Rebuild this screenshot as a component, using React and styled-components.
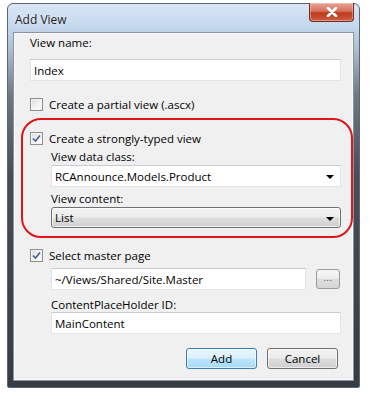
import React from 'react'
import styled, { createGlobalStyle } from 'styled-components'

const GlobalStyle = createGlobalStyle`
  html, body {
    margin: 0;
    padding: 0;
    background: #fff;
  }
  body {
    font-family: "Open Sans", "Liberation Sans", sans-serif;
    font-size: 11.5px;
    color: #000;
  }
`

const Page = styled.div`
  width: 373px;
  height: 399px;
  padding: 3px 0 0 7px;
  box-sizing: border-box;
`

const Window = styled.div`
  width: 353px;
  height: 385px;
  box-sizing: border-box;
  padding: 0 5px 6px 5px;
  border-radius: 6px 6px 2px 2px;
  border: 1px solid #5d6670;
  background: linear-gradient(
    to bottom,
    #d9e7f6 0px,
    #c2d6ec 24px,
    #aebfd2 45px,
    #6f7a86 90px,
    #474e57 170px,
    #363c43 100%
  );
  display: flex;
  flex-direction: column;
`

const TitleBar = styled.div`
  height: 28px;
  display: flex;
  align-items: flex-start;
  justify-content: space-between;
`

const Title = styled.div`
  font-size: 12px;
  color: #1e1e1e;
  padding: 7px 0 0 2px;
  text-shadow: 0 0 6px rgba(255, 255, 255, 0.9);
`

const CloseButton = styled.div`
  width: 43px;
  height: 18px;
  margin-top: -1px;
  border: 1px solid #6b2d22;
  border-top: none;
  border-radius: 0 0 4px 4px;
  background: linear-gradient(to bottom, #e8a493 0%, #d4735e 45%, #c0391f 55%, #cf5d3f 100%);
  box-shadow: inset 0 0 0 1px rgba(255, 220, 210, 0.45);
  display: flex;
  align-items: center;
  justify-content: center;
`

const Client = styled.div`
  flex: 1;
  background: #f0f0f0;
  border: 1px solid #8a939c;
  box-shadow: inset 0 0 0 1px #fafafa;
  padding: 2px 11px 0 16px;
  display: flex;
  flex-direction: column;
`

const Label = styled.div`
  height: 15px;
  line-height: 15px;
  margin-top: ${p => p.$top || 0}px;
  margin-left: ${p => p.$indent || 0}px;
`

const TextBox = styled.div`
  flex-shrink: 0;
  height: ${p => p.$height || 22}px;
  width: ${p => p.$width || 311}px;
  box-sizing: border-box;
  margin-top: ${p => p.$top || 0}px;
  margin-left: ${p => p.$indent || 0}px;
  background: #fff;
  border: 1px solid #e2e6ea;
  border-top-color: #c7ccd2;
  padding: 0 6px 0 3px;
  display: flex;
  align-items: center;
  justify-content: space-between;
`

const ComboBox = styled.div`
  height: 21px;
  width: 290px;
  box-sizing: border-box;
  margin-top: ${p => p.$top || 0}px;
  margin-left: 21px;
  border: 1px solid #707070;
  border-radius: 3px;
  background: linear-gradient(to bottom, #f4f4f4 0%, #ebebeb 48%, #dddddd 52%, #d0d0d0 100%);
  box-shadow: inset 0 0 0 1px rgba(255, 255, 255, 0.7);
  padding: 0 6px 0 3px;
  display: flex;
  align-items: center;
  justify-content: space-between;
`

const Arrow = styled.span`
  width: 0;
  height: 0;
  border-left: 4px solid transparent;
  border-right: 4px solid transparent;
  border-top: 4px solid #000;
  margin-top: 2px;
`

const CheckRow = styled.div`
  display: flex;
  align-items: center;
  gap: 6px;
  height: 15px;
  margin-top: ${p => p.$top || 0}px;
`

const Box = styled.span`
  width: 13px;
  height: 13px;
  box-sizing: border-box;
  border: 1px solid #8e8f8f;
  background: linear-gradient(135deg, #dcdcdc 0%, #f4f4f4 60%, #fff 100%);
  box-shadow: inset 0 0 0 1px #f4f4f4;
  display: flex;
  align-items: center;
  justify-content: center;
`

const Highlight = styled.div`
  flex-shrink: 0;
  margin: 6px 0 0 -9px;
  width: 332px;
  height: 120px;
  box-sizing: border-box;
  border: 2px solid #e0141b;
  border-radius: 20px;
  padding: 11px 0 0 7px;
  display: flex;
  flex-direction: column;
`

const Row = styled.div`
  display: flex;
  align-items: center;
  gap: 10px;
  margin-top: ${p => p.$top || 0}px;
`

const SmallButton = styled.div`
  width: 24px;
  height: 20px;
  box-sizing: border-box;
  border: 1px solid #9a9a9a;
  border-radius: 3px;
  background: linear-gradient(to bottom, #f6f6f6 0%, #ececec 48%, #dedede 52%, #d6d6d6 100%);
  display: flex;
  align-items: center;
  justify-content: center;
  font-size: 9px;
  color: #333;
  letter-spacing: 0.5px;
  padding-bottom: 3px;
`

const ButtonBar = styled.div`
  display: flex;
  justify-content: flex-end;
  gap: 10px;
  margin-top: 14px;
  padding-right: 4px;
`

const Button = styled.div`
  width: 71px;
  height: 21px;
  box-sizing: border-box;
  border: 1px solid ${p => (p.$primary ? '#3c7fb1' : '#707070')};
  border-radius: 3px;
  background: ${p =>
    p.$primary
      ? 'linear-gradient(to bottom, #eaf6fd 0%, #d9f0fc 48%, #bee6fd 52%, #a7d9f5 100%)'
      : 'linear-gradient(to bottom, #f2f2f2 0%, #ebebeb 48%, #dddddd 52%, #cfcfcf 100%)'};
  box-shadow: inset 0 0 0 1px rgba(255, 255, 255, 0.6);
  display: flex;
  align-items: center;
  justify-content: center;
`

const Checkbox = ({ checked }) => (
  <Box>
    {checked && (
      <svg width="9" height="9" viewBox="0 0 9 9">
        <path d="M1 4.5 L3.5 7 L8 1.5" fill="none" stroke="#4a5f97" strokeWidth="1.6" />
      </svg>
    )}
  </Box>
)

export default function App() {
  return (
    <Page>
      <GlobalStyle />
      <Window>
        <TitleBar>
          <Title>Add View</Title>
          <CloseButton>
            <svg width="12" height="10" viewBox="0 0 12 10">
              <path d="M2 1 L10 9 M10 1 L2 9" stroke="#fff" strokeWidth="2.6" strokeLinecap="round" />
            </svg>
          </CloseButton>
        </TitleBar>
        <Client>
          <Label>View name:</Label>
          <TextBox $top={9}>Index</TextBox>
          <CheckRow $top={16}>
            <Checkbox />
            Create a partial view (.ascx)
          </CheckRow>
          <Highlight>
            <CheckRow>
              <Checkbox checked />
              Create a strongly-typed view
            </CheckRow>
            <Label $top={3} $indent={21}>View data class:</Label>
            <TextBox $top={1} $indent={21} $width={290}>
              RCAnnounce.Models.Product
              <Arrow />
            </TextBox>
            <Label $top={4} $indent={21}>View content:</Label>
            <ComboBox $top={1}>
              List
              <Arrow />
            </ComboBox>
          </Highlight>
          <CheckRow $top={10}>
            <Checkbox checked />
            Select master page
          </CheckRow>
          <Row $top={5}>
            <TextBox $indent={21} $width={255}>~/Views/Shared/Site.Master</TextBox>
            <SmallButton>...</SmallButton>
          </Row>
          <Label $top={7} $indent={21}>ContentPlaceHolder ID:</Label>
          <TextBox $indent={21} $width={290}>MainContent</TextBox>
          <ButtonBar>
            <Button $primary>Add</Button>
            <Button>Cancel</Button>
          </ButtonBar>
        </Client>
      </Window>
    </Page>
  )
}
